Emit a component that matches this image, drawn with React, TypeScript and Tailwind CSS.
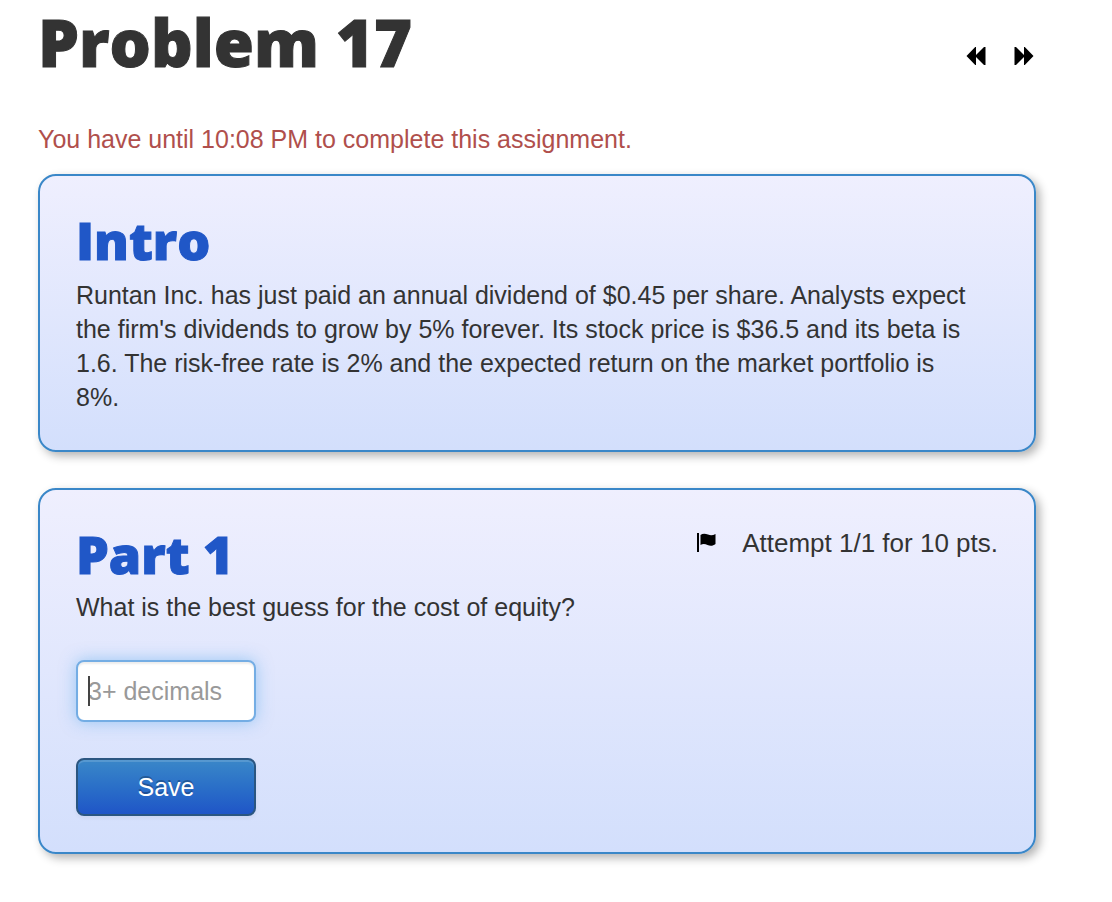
import type { ReactNode } from 'react';

const BODY = "font-['Liberation_Sans',Arial,sans-serif]";
const HEADING = "font-['Open_Sans',sans-serif] font-extrabold";
const CARD =
  'rounded-[18px] border-2 border-[#3a87c8] bg-linear-to-b from-[#efeffe] to-[#d3dffc] px-9 shadow-[4px_4px_10px_rgba(0,0,0,0.3)]';

function CardTitle({ children }: { children: ReactNode }) {
  return (
    <h2 className={`${HEADING} pb-1 text-[52px] leading-[56px] text-[#2057c7] [-webkit-text-stroke:1px_#2057c7]`}>
      {children}
    </h2>
  );
}

function BackwardIcon() {
  return (
    <svg viewBox="0 0 20 20" className="size-5" fill="#000" aria-hidden="true">
      <path d="M0.5 10 L9.200 1 H10 V9 L18 1 H19.5 V19 H18 L10 11 V19 H9.200 Z" />
    </svg>
  );
}

function ForwardIcon() {
  return (
    <svg viewBox="0 0 20 20" className="size-5" fill="#000" aria-hidden="true">
      <path d="M19.5 10 L10.800 1 H10 V9 L2 1 H0.5 V19 H2 L10 11 V19 H10.800 Z" />
    </svg>
  );
}

function FlagIcon() {
  return (
    <svg viewBox="0 0 20 20" className="size-5" fill="#000" aria-hidden="true">
      <path d="M1 0 H3 V19 H1 Z" />
      <path d="M4.500 2 C6.500 0.500 9 0.400 12 1.600 C14.500 2.800 17 2.500 19.500 1 V11 C17 13.200 14 13.200 11.500 12 C9 10.800 6.500 10.800 4.500 12 Z" />
    </svg>
  );
}

export default function App() {
  return (
    <main className={`${BODY} min-h-screen bg-white pr-[76px] pb-12 pl-[38px] text-[26px] leading-[34px] text-[#333]`}>
      <header className="flex items-start justify-between">
        <h1 className={`${HEADING} py-0.5 text-[65px] leading-[80px] [-webkit-text-stroke:1px_#333]`}>Problem 17</h1>
        <nav className="flex gap-7 pt-[46px] pr-0.5">
          <a href="#previous" aria-label="Previous problem">
            <BackwardIcon />
          </a>
          <a href="#next" aria-label="Next problem">
            <ForwardIcon />
          </a>
        </nav>
      </header>

      <p className="mt-[38px] text-[25px] text-[#b04f4c]">You have until 10:08 PM to complete this assignment.</p>

      <section className={`${CARD} mt-[18px] pt-9 pb-9`}>
        <CardTitle>Intro</CardTitle>
        <p className="mt-1.5 pr-4 text-[25px]">
          Runtan Inc. has just paid an annual dividend of $0.45 per share. Analysts expect the firm's dividends to grow
          by 5% forever. Its stock price is $36.5 and its beta is 1.6. The risk-free rate is 2% and the expected return
          on the market portfolio is 8%.
        </p>
      </section>

      <section className={`${CARD} mt-9 pt-9 pb-9`}>
        <div className="flex items-start justify-between">
          <CardTitle>Part 1</CardTitle>
          <div className="flex items-center gap-[26px]">
            <FlagIcon />
            <span>Attempt 1/1 for 10 pts.</span>
          </div>
        </div>
        <form onSubmit={(event) => event.preventDefault()}>
          <label htmlFor="answer" className="mt-1 block text-[25px]">
            What is the best guess for the cost of equity?
          </label>
          <div className="relative mt-9 w-[180px]">
            <input
              id="answer"
              type="text"
              placeholder="3+ decimals"
              className="block h-[62px] w-full rounded-lg border-2 border-[#74ade4] bg-white px-2.5 text-[25px] caret-transparent shadow-[inset_0_2px_2px_rgba(0,0,0,0.075),0_0_16px_rgba(82,168,236,0.5)] outline-none placeholder:text-[#999]"
            />
            <span className="absolute top-4 left-3 h-[30px] w-0.5 bg-[#444]" aria-hidden="true" />
          </div>
          <button
            type="submit"
            className="mt-9 block h-[58px] w-[180px] rounded-lg border-2 border-[#2b5681] bg-linear-to-b from-[#3a87c8] to-[#2055c7] text-[25px] text-white shadow-[inset_0_2px_0_rgba(255,255,255,0.15),0_2px_4px_rgba(0,0,0,0.05)] text-shadow-[0_-2px_0_rgba(0,0,0,0.25)]"
          >
            Save
          </button>
        </form>
      </section>
    </main>
  );
}
